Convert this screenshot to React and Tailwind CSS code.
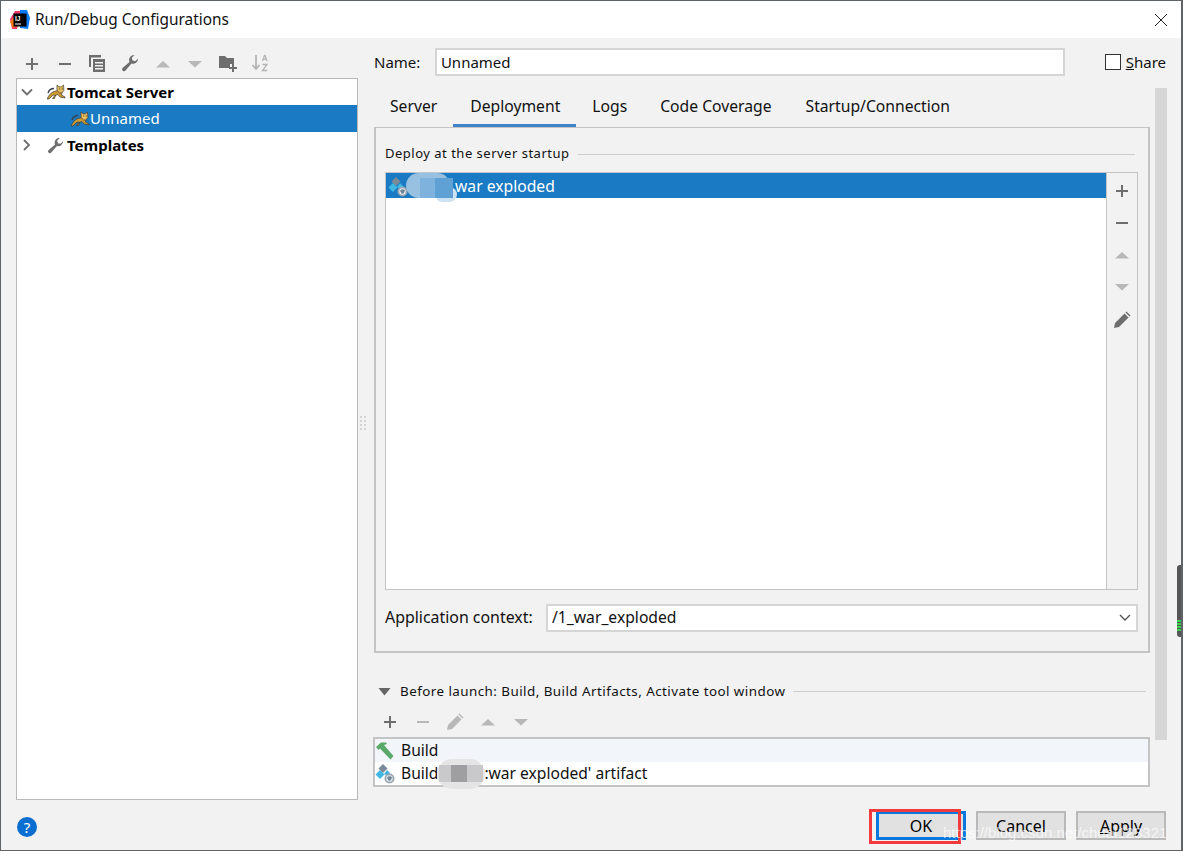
import React from 'react';

const Plus = ({ c = '#6e6e6e' }) => (
    <svg width="16" height="16" viewBox="0 0 16 16"><path d="M7 2h2v5h5v2H9v5H7V9H2V7h5z" fill={c} /></svg>
);
const Minus = ({ c = '#6e6e6e' }) => (
    <svg width="16" height="16" viewBox="0 0 16 16"><path d="M2 7h12v2H2z" fill={c} /></svg>
);
const Up = ({ c = '#b8b8b8' }) => (
    <svg width="16" height="16" viewBox="0 0 16 16"><path d="M1 11.500 8 5l7 6.500z" fill={c} /></svg>
);
const Down = ({ c = '#b8b8b8' }) => (
    <svg width="16" height="16" viewBox="0 0 16 16"><path d="M1 5h14l-7 6.500z" fill={c} /></svg>
);
const Pencil = ({ c = '#6e6e6e' }) => (
    <svg width="18" height="18" viewBox="0 0 18 18"><path d="M1 17l1-5L11.500 2.500l4 4L6 16zM12.500 1.500l1-1 4 4-1 1z" fill={c} /></svg>
);
const Wrench = ({ c = '#6e6e6e', s = 18 }) => (
    <svg width={s} height={s} viewBox="0 0 18 18"><path d="M17 4.500a5 5 0 0 1-6.500 5L4.500 16.500a1.800 1.800 0 0 1-3-2.500l7-6A5 5 0 0 1 13.500 1L10.800 3.700l.7 2.800 2.800.7L17 4.500z" fill={c} /></svg>
);
const Copy = () => (
    <svg width="18" height="18" viewBox="0 0 18 18" fill="#6e6e6e"><path d="M1 1h12v2.500H3V13H1z" /><path d="M5 5h12v13H5zm2 3v1.500h8V8zm0 3v1.500h8V11zm0 3v1.500h8V14z" fillRule="evenodd" /></svg>
);
const FolderPlus = () => (
    <svg width="18" height="18" viewBox="0 0 18 18"><path d="M0 2h6l2 2h7v6h-4v4H0z" fill="#6e6e6e" /><path d="M13 10h2v3h3v2h-3v3h-2v-3h-3v-2h3z" fill="#6e6e6e" /></svg>
);
const SortAz = () => (
    <svg width="18" height="18" viewBox="0 0 18 18" fill="none"><path d="M5 1v14M1.500 11 5 15l3.500-4" stroke="#b4b4b4" strokeWidth="1.800" /><path d="M11.500 7 13.500 1.500h.6L16 7M12 5.200h3.600M11.500 10.500h4.500l-4.500 6h4.800" stroke="#b4b4b4" strokeWidth="1.300" /></svg>
);
const Chevron = ({ open }) => (
    <svg width="12" height="12" viewBox="0 0 12 12" fill="none">
        <path d={open ? 'M1 3.500l5 5 5-5' : 'M3 1l5 5-5 5'} stroke="#6e6e6e" strokeWidth="1.800" />
    </svg>
);
const Tomcat = () => (
    <svg width="19" height="16" viewBox="0 0 19 16">
        <path d="M1 9c1-3 3-4.500 6-4.500" stroke="#38424f" strokeWidth="1.400" fill="none" />
        <path d="M0 15C2 11 4 8.500 7 7.500l4-1 4 2-.5 2.500 3.500 2v1l-5-1-2-2.500-3 1-2.500 3H7.500L8.500 11.500 6 11l-4 4z" fill="#d09c32" stroke="#3d3a33" strokeWidth=".7" />
        <path d="M10 1 12 2.800h2.500L16.500 1l.4 5.500L14.700 9h-2L10 6.500z" fill="#e8bd5c" stroke="#3d3a33" strokeWidth=".7" />
        <path d="M12.300 5h.9M14.800 5h.9" stroke="#222" strokeWidth=".9" />
    </svg>
);
const Artifact = () => (
    <svg width="22" height="22" viewBox="0 0 22 22">
        <path d="M8 1l4.500 4.500L8 10 3.500 5.500z" fill="#7b8a99" />
        <path d="M3.500 7 8 11.500 3.500 16-1 11.500z" fill="#40b6e0" transform="translate(1.500 0)" />
        <path d="M12 7l3.500 3.500-3 2.500L9 11z" fill="#40b6e0" />
        <circle cx="14.500" cy="15.500" r="5" fill="#9aa7b0" />
        <circle cx="14.500" cy="15.500" r="3.200" fill="#e8edf1" />
        <path d="M12 15c1-2 3-2 5-1l-1 3-2 1z" fill="#6f8596" />
    </svg>
);
const Hammer = () => (
    <svg width="20" height="18" viewBox="0 0 20 18">
        <path d="M1 5 6 .5h5l1 1.500-3 1 9.500 11-3 3.500L5 6.500l-1.500 1.500z" fill="#59a869" />
    </svg>
);
const IdeaLogo = () => (
    <svg width="20" height="20" viewBox="0 0 20 20">
        <path d="M0 9 5 1h6l-4 18H2z" fill="#ee3a6a" />
        <path d="M0 12 4 7l3 9-4 2z" fill="#f97a12" />
        <path d="M10 0h7l3 8-2 11-8-1z" fill="#087cfa" />
        <rect x="3.500" y="3.500" width="13" height="13" fill="#000" />
        <rect x="5" y="13.500" width="6" height="1" fill="#fff" />
        <text x="5" y="11" fontSize="6.500" fontWeight="700" fill="#fff" fontFamily="Liberation Sans, sans-serif">IJ</text>
    </svg>
);

const Tool = ({ children, w = 'w-[32.600px]' }) => (
    <div className={`${w} flex shrink-0 items-center justify-center`}>{children}</div>
);

const Button = ({ children, className }) => (
    <div className={`flex h-[29px] items-center justify-center bg-[#e1e1e1] text-[16px] text-black ${className}`}>{children}</div>
);

export default function App() {
    return (
        <div
            className="relative flex h-[851px] w-[1183px] flex-col overflow-hidden border border-r-2 border-[#5f6468] bg-[#f2f2f2] text-[15px] text-[#111]"
            style={{ fontFamily: '"Noto Sans", sans-serif' }}
        >
            {/* Title bar */}
            <div className="flex h-[37px] shrink-0 items-center bg-white pl-[9px] pr-[13px]">
                <IdeaLogo />
                <span className="ml-[5px] flex-1 text-[15.400px] text-[#111]">Run/Debug Configurations</span>
                <svg width="14" height="14" viewBox="0 0 14 14"><path d="M1 1l12 12M13 1 1 13" stroke="#222" strokeWidth="1" /></svg>
            </div>

            <div className="flex min-h-0 flex-1 pl-[15px] pr-[15px]">
                {/* Left column */}
                <div className="flex w-[342px] shrink-0 flex-col">
                    <div className="flex h-[40px] shrink-0 items-end pb-[6px]">
                        <Tool><Plus /></Tool>
                        <Tool><Minus /></Tool>
                        <Tool><Copy /></Tool>
                        <Tool><Wrench /></Tool>
                        <Tool><Up /></Tool>
                        <Tool><Down /></Tool>
                        <Tool><FolderPlus /></Tool>
                        <Tool><SortAz /></Tool>
                    </div>
                    <div className="h-[722px] shrink-0 border border-[#b9b9b9] bg-white">
                        <div className="flex h-[26px] items-center pl-[4px] font-bold text-black">
                            <div className="w-[26px]"><Chevron open /></div>
                            <Tomcat />
                            <span className="ml-[1px]">Tomcat Server</span>
                        </div>
                        <div className="flex h-[27px] items-center bg-[#1a7ac3] pl-[54px] text-white">
                            <Tomcat />
                            <span>Unnamed</span>
                        </div>
                        <div className="flex h-[26px] items-center pl-[4px] font-bold text-black">
                            <div className="w-[26px]"><Chevron /></div>
                            <Wrench s={17} />
                            <span className="ml-[3px]">Templates</span>
                        </div>
                    </div>
                    <div className="flex flex-1 items-start pl-[1px] pt-[17px]">
                        <div className="flex h-[20px] w-[20px] items-center justify-center rounded-full bg-[#0a6fd0] text-[15px] text-white">?</div>
                    </div>
                </div>

                {/* Splitter */}
                <div className="flex w-[16px] shrink-0 items-center pb-[42px] pl-[2px]">
                    <div className="grid grid-cols-2 gap-[2px]">
                        {[0, 1, 2, 3, 4, 5, 6, 7].map((i) => (
                            <span key={i} className="h-[2px] w-[2px] bg-[#d4d4d4]" />
                        ))}
                    </div>
                </div>

                {/* Right column */}
                <div className="flex min-w-0 flex-1 flex-col">
                    <div className="flex h-[48px] shrink-0 items-center">
                        <span className="w-[61px]">Name:</span>
                        <div className="flex h-[28px] w-[631px] items-center border-2 border-[#d5d5d5] bg-white pl-[4px]">Unnamed</div>
                        <div className="ml-[40px] h-[16px] w-[16px] border border-[#333] bg-white" />
                        <span className="ml-[5px]"><span className="underline">S</span>hare</span>
                    </div>

                    <div className="flex min-h-0">
                        {/* Tabbed area with before launch */}
                        <div className="flex w-[776px] shrink-0 flex-col">
                            <div className="flex h-[41px] shrink-0 items-end text-[15.700px]">
                                <div className="-mb-px flex h-[38px] items-center border-b-4 border-transparent px-[16px]">Server</div>
                                <div className="-mb-px flex h-[38px] items-center border-b-4 border-[#4083c9] pl-[17px] pr-[16px]">Deployment</div>
                                <div className="-mb-px flex h-[38px] items-center border-b-4 border-transparent px-[16px]">Logs</div>
                                <div className="-mb-px flex h-[38px] items-center border-b-4 border-transparent pl-[17px] pr-[17px]">Code Coverage</div>
                                <div className="-mb-px flex h-[38px] items-center border-b-4 border-transparent pl-[17px] pr-[16px]">Startup/Connection</div>
                            </div>
                            <div className="flex h-[526px] shrink-0 flex-col border-2 border-t border-[#c4c4c4] pl-[9px] pr-[10px]">
                                <div className="flex h-[44px] shrink-0 items-center pt-[8px] text-[13px] tracking-[0.500px]">
                                    <span>Deploy at the server startup</span>
                                    <div className="ml-[8px] mr-[3px] h-px flex-1 bg-[#cdcdcd]" />
                                </div>
                                <div className="flex h-[418px] shrink-0 border border-[#c4c4c4] bg-white">
                                    <div className="relative min-w-0 flex-1">
                                        <div className="flex h-[25px] items-center bg-[#1a7ac3] pl-[2px] pt-[2px] text-[15.700px] text-white">
                                            <Artifact />
                                            <span className="ml-[45px]">war exploded</span>
                                        </div>
                                        {/* smudge painted over the artifact name */}
                                        <div className="absolute left-[49px] top-[14px] h-[15px] w-[22px] rounded-full bg-[#cfe2f1]" />
                                        <div className="absolute left-[20px] top-0 h-[25px] w-[44px] rounded-full bg-[#97c0e1]" />
                                        <div className="absolute left-[34px] top-[5px] h-[20px] w-[15px] bg-[#7fb3de]" />
                                        <div className="absolute left-[49px] top-[5px] h-[20px] w-[18px] bg-[#5fa0d5]" />
                                    </div>
                                    <div className="flex w-[31px] shrink-0 flex-col items-center gap-[16px] border-l border-[#c4c4c4] bg-[#f2f2f2] pt-[10px]">
                                        <Plus />
                                        <Minus />
                                        <Up />
                                        <Down />
                                        <Pencil />
                                    </div>
                                </div>
                                <div className="flex h-[61px] shrink-0 items-center pb-[6px] text-[15.900px]">
                                    <span className="w-[161px]">Application context:</span>
                                    <div className="flex h-[28px] w-[592px] items-center justify-between border-2 border-[#d5d5d5] bg-white pl-[4px] pr-[5px]">
                                        <span className="text-[15.700px]">/1_war_exploded</span>
                                        <svg width="12" height="8" viewBox="0 0 12 8" fill="none"><path d="M1 1l5 5 5-5" stroke="#555" strokeWidth="1.400" /></svg>
                                    </div>
                                </div>
                            </div>

                            <div className="flex h-[48px] shrink-0 items-end text-[13.400px] tracking-[0.450px]">
                                <div className="flex h-[19px] w-full items-center px-[4px]">
                                    <svg width="13" height="8" viewBox="0 0 13 8"><path d="M.5 0h12L6.500 7.500z" fill="#666" /></svg>
                                    <span className="ml-[9px]">Before launch: Build, Build Artifacts, Activate tool window</span>
                                    <div className="ml-[8px] h-px flex-1 bg-[#cdcdcd]" />
                                </div>
                            </div>
                            <div className="flex h-[36px] shrink-0 items-center pt-[6px]">
                                <Tool><Plus /></Tool>
                                <Tool><Minus c="#b8b8b8" /></Tool>
                                <Tool><Pencil c="#b8b8b8" /></Tool>
                                <Tool><Up /></Tool>
                                <Tool><Down /></Tool>
                            </div>
                            <div className="-ml-px h-[50px] shrink-0 border-2 border-[#c4c4c4] bg-white text-[15.600px]">
                                <div className="flex h-[23px] items-center bg-[#f2f5f9]">
                                    <Hammer />
                                    <span className="ml-[6px]">Build</span>
                                </div>
                                <div className="relative flex h-[23px] items-center">
                                    <Artifact />
                                    <span className="ml-[4px]">Build</span>
                                    <span className="ml-[46px]">:war exploded' artifact</span>
                                    <div className="absolute left-[62px] top-[-3px] h-[30px] w-[48px] rounded-full bg-[#e4e4e5]" />
                                    <div className="absolute left-[64px] top-[3px] h-[17px] w-[44px] bg-[#c9c9cb]" />
                                    <div className="absolute left-[76px] top-[3px] h-[17px] w-[16px] bg-[#9f9fa1]" />
                                </div>
                            </div>
                        </div>

                        {/* Scroll track */}
                        <div className="ml-[5px] mt-[2px] h-[652px] w-[12px] shrink-0 bg-[#d6d6d6]" />
                    </div>

                    <div className="flex flex-1 items-start justify-end gap-[10px] pt-[24px]">
                        <Button className="w-[90px] border-[3px] border-[#0a78dc]">OK</Button>
                        <Button className="w-[90px] border-2 border-[#b9b9b9]">Cancel</Button>
                        <Button className="w-[90px] border-2 border-[#b9b9b9]"><span><span className="underline">A</span>pply</span></Button>
                    </div>
                </div>
            </div>

            {/* Annotation and watermark painted on the screenshot */}
            <div className="absolute left-[868px] top-[808px] h-[35px] w-[92px] border-[3px] border-[#f03a3e]" />
            <div
                className="absolute left-[942px] top-[821px] whitespace-nowrap text-[15px] text-white/70"
                style={{ fontFamily: '"Liberation Sans", sans-serif' }}
            >
                https://blog.csdn.net/chuai123321
            </div>
            <div className="absolute left-[1176px] top-[564px] flex h-[72px] w-[7px] flex-col justify-end gap-px rounded-l-[3px] bg-[#565656] pb-[6px]">
                <span className="h-[2px] bg-[#36d24f]" />
                <span className="h-[2px] bg-[#36d24f]" />
                <span className="h-[2px] bg-[#36d24f]" />
                <span className="h-[2px] bg-[#36d24f]" />
            </div>
        </div>
    );
}
